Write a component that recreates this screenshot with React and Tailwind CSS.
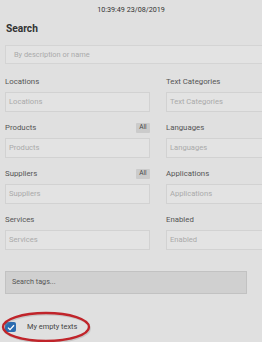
import React from 'react';

const font = { fontFamily: 'Roboto, "Liberation Sans", sans-serif' };

function Field({ label, placeholder, all }) {
  return (
    <div className="flex flex-col">
      <div className="flex items-center justify-between h-[14px] mb-[3px]">
        <span className="text-[7.8px] text-[#555]">{label}</span>
        {all && (
          <span className="h-[10px] w-[14px] flex items-center justify-center bg-[#cbcbcb] text-[6.5px] text-[#444] rounded-[1px]">
            All
          </span>
        )}
      </div>
      <div className="h-[20px] border border-[#d2d2d2] bg-[#e3e3e3] flex items-center px-[3px] text-[7.6px] text-[#aaa]">
        {placeholder}
      </div>
    </div>
  );
}

export default function App() {
  return (
    <div className="relative w-[262px] h-[342px] overflow-hidden bg-[#e0e0e0]" style={font}>
      <div className="w-[310px] px-[5px]">
        <div className="h-[20px] flex items-center justify-center w-[252px] text-[7.2px] text-[#333]">
          10:39:49 23/08/2019
        </div>
        <div className="h-[18px] flex items-center pl-[1px] text-[10.2px] font-bold text-[#333]">
          Search
        </div>
        <div className="mt-[7px] h-[19px] border border-[#d4d4d4] bg-[#e3e3e3] flex items-center px-[8px] text-[7.4px] text-[#aaa]">
          By description or name
        </div>

        <div className="mt-[11px] grid grid-cols-[145px_145px] gap-x-[16px] gap-y-[9px]">
          <Field label="Locations" placeholder="Locations" />
          <Field label="Text Categories" placeholder="Text Categories" />
          <Field label="Products" placeholder="Products" all />
          <Field label="Languages" placeholder="Languages" />
          <Field label="Suppliers" placeholder="Suppliers" all />
          <Field label="Applications" placeholder="Applications" />
          <Field label="Services" placeholder="Services" />
          <Field label="Enabled" placeholder="Enabled" />
        </div>

        <div className="mt-[21px] w-[242px] h-[23px] bg-[#d0d0d0] border border-[#c2c2c2] flex items-center px-[6px] text-[7.2px] text-[#555]">
          Search tags...
        </div>

        <div className="mt-[26px] h-[14px] flex items-center">
          <span className="w-[11px] h-[10px] rounded-[2px] bg-[#2c6cb0] flex items-center justify-center">
            <svg width="8" height="7" viewBox="0 0 8 7">
              <path d="M1 3.6 L3 5.6 L7 1.2" stroke="#fff" strokeWidth="1.3" fill="none" />
            </svg>
          </span>
          <span className="ml-[11px] text-[7.4px] text-[#444]">My empty texts</span>
        </div>
      </div>

      <svg className="absolute left-0 top-[306px]" width="100" height="40" viewBox="0 0 100 40">
        <ellipse cx="46" cy="21" rx="43" ry="14" fill="none" stroke="#999" strokeWidth="2" opacity="0.35" transform="translate(1 1.5)" />
        <ellipse cx="46" cy="21" rx="43" ry="14" fill="none" stroke="#c0242a" strokeWidth="2.4" />
      </svg>
    </div>
  );
}
